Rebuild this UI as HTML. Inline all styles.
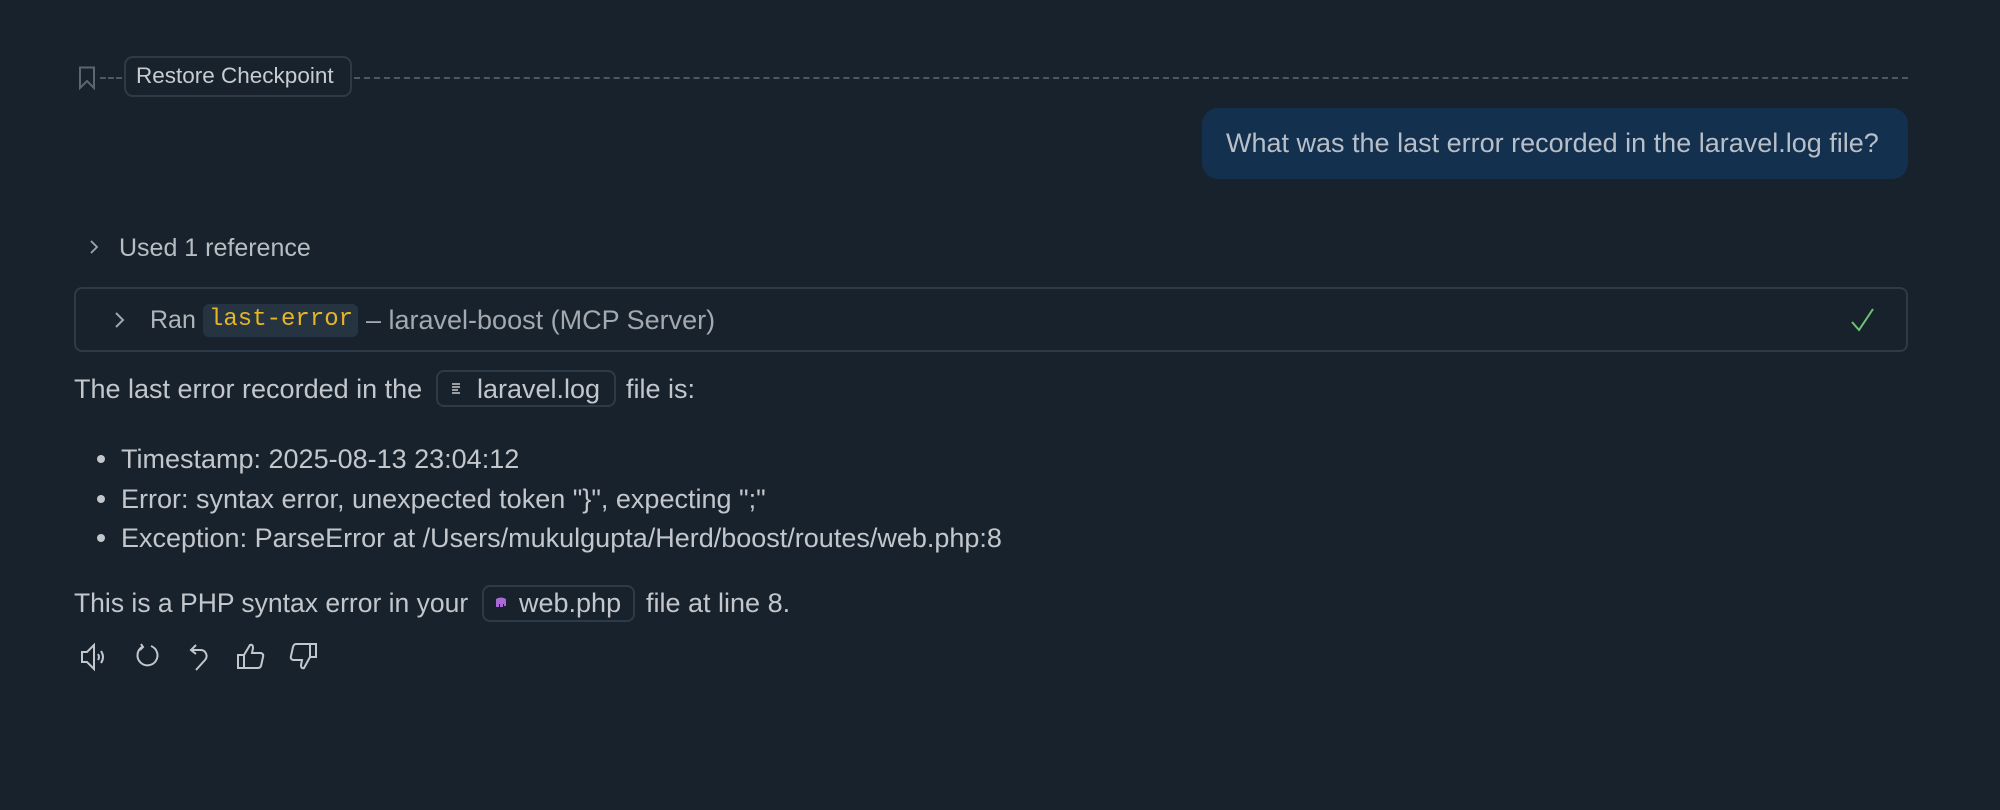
<!DOCTYPE html>
<html><head><meta charset="utf-8"><style>
html,body{margin:0;padding:0;width:2000px;height:810px;background:#17222d;overflow:hidden;font-family:"Liberation Sans",sans-serif;color:#c3c7cc}
.a{position:absolute}
.t{font-size:27px;white-space:nowrap;line-height:32px}
.pill{position:absolute;border:2px solid #2d3a47;border-radius:8px;box-sizing:border-box}
</style></head><body>
<svg class="a" style="left:78px;top:66px" width="18" height="24" viewBox="0 0 18 24"><path d="M2 1.5H16V22L9 15L2 22Z" fill="none" stroke="#5c6670" stroke-width="2"/></svg>
<div class="a" style="left:100px;top:77px;width:22px;border-top:2px dashed #4e5862"></div>
<div class="a" style="left:354px;top:77px;width:1554px;border-top:2px dashed #4e5862"></div>
<div class="pill" style="left:124px;top:56px;width:228px;height:41px;border-radius:9px"></div>
<div class="a t" style="left:136px;top:62px;font-size:22.5px;line-height:28px;color:#c8ccd0">Restore Checkpoint</div>

<div class="a" style="left:1202px;top:108px;width:706px;height:71px;background:#13304f;border-radius:16px"></div>
<div class="a t" style="left:1226px;top:127px;color:#b8bfc7">What was the last error recorded in the laravel.log file?</div>

<svg class="a" style="left:88px;top:238px" width="12" height="18" viewBox="0 0 12 18"><path d="M3 3L9 9L3 15" fill="none" stroke="#a0a6ac" stroke-width="1.8"/></svg>
<div class="a t" style="left:119px;top:234px;font-size:25px;line-height:28px;color:#b8bdc2">Used 1 reference</div>

<div class="pill" style="left:74px;top:287px;width:1834px;height:65px;border-radius:8px"></div>
<svg class="a" style="left:113px;top:310px" width="14" height="20" viewBox="0 0 14 20"><path d="M3 3L10 10L3 17" fill="none" stroke="#a0a6ac" stroke-width="2"/></svg>
<div class="a t" style="left:150px;top:304px;font-size:25px;color:#b0b5ba">Ran</div>
<div class="a" style="left:203px;top:304px;width:155px;height:33px;background:#263442;border-radius:6px"></div>
<div class="a t" style="left:209px;top:305px;font-family:'Liberation Mono',monospace;font-size:24px;line-height:30px;color:#e5b625">last-error</div>
<div class="a t" style="left:366px;top:304px;color:#a3a9af">– laravel-boost (MCP Server)</div>
<svg class="a" style="left:1850px;top:306px" width="26" height="28" viewBox="0 0 26 28"><path d="M2 16L9 24L23 3" fill="none" stroke="#6fc46f" stroke-width="2"/></svg>

<div class="a t" style="left:74px;top:373px">The last error recorded in the</div>
<div class="pill" style="left:436px;top:370px;width:180px;height:37px"></div>
<svg class="a" style="left:451px;top:381px" width="12" height="16" viewBox="0 0 12 16"><path d="M1 3H9M1 6H9M1 9H7M1 12H9" stroke="#c3c7cc" stroke-width="1.6"/></svg>
<div class="a t" style="left:477px;top:373px">laravel.log</div>
<div class="a t" style="left:626px;top:373px">file is:</div>

<div class="a" style="left:97px;top:455px;width:8px;height:8px;border-radius:50%;background:#c3c7cc"></div>
<div class="a" style="left:97px;top:495px;width:8px;height:8px;border-radius:50%;background:#c3c7cc"></div>
<div class="a" style="left:97px;top:534px;width:8px;height:8px;border-radius:50%;background:#c3c7cc"></div>
<div class="a t" style="left:121px;top:443px">Timestamp: 2025-08-13 23:04:12</div>
<div class="a t" style="left:121px;top:483px">Error: syntax error, unexpected token "}", expecting ";"</div>
<div class="a t" style="left:121px;top:522px">Exception: ParseError at /Users/mukulgupta/Herd/boost/routes/web.php:8</div>

<div class="a t" style="left:74px;top:587px;font-size:26.5px">This is a PHP syntax error in your</div>
<div class="pill" style="left:482px;top:585px;width:153px;height:37px"></div>
<svg class="a" style="left:494px;top:596px" width="14" height="14" viewBox="0 0 14 14"><path d="M2 3Q7 0 12 3V10H10V8H9V11H6V8H5V11H2Z" fill="#a86bd6"/></svg>
<div class="a t" style="left:519px;top:587px">web.php</div>
<div class="a t" style="left:646px;top:587px">file at line 8.</div>

<svg class="a" style="left:80px;top:642px" width="30" height="30" viewBox="0 0 30 30" fill="none" stroke="#c3c7cc" stroke-width="2"><path d="M2 10H7L14 3V27L7 20H2Z"/><path d="M18 12Q20 15 18 18M21 9Q25 15 21 21"/></svg>
<svg class="a" style="left:133px;top:642px" width="28" height="28" viewBox="0 0 28 28" fill="none" stroke="#c3c7cc" stroke-width="2"><path d="M9 5A10 10 0 1 0 18 4"/><path d="M8 2L10 5L7 8"/></svg>
<svg class="a" style="left:188px;top:642px" width="24" height="30" viewBox="0 0 24 30" fill="none" stroke="#c3c7cc" stroke-width="2"><path d="M4 8H13A6 6 0 0 1 17 18L8 28"/><path d="M8 3L3 8L8 12"/></svg>
<svg class="a" style="left:236px;top:642px" width="30" height="28" viewBox="0 0 30 28" fill="none" stroke="#c3c7cc" stroke-width="2"><path d="M2 13H8V26H2Z"/><path d="M8 13L14 3Q17 2 17 6L16 11H25Q28 12 27 15L25 24Q24 26 22 26H8"/></svg>
<svg class="a" style="left:288px;top:642px" width="30" height="30" viewBox="0 0 30 30" fill="none" stroke="#c3c7cc" stroke-width="2"><path d="M22 2H28V15H22Z"/><path d="M22 15L16 26Q13 27 13 23L14 18H5Q2 17 3 14L5 5Q6 2 8 2H22"/></svg>
</body></html>
